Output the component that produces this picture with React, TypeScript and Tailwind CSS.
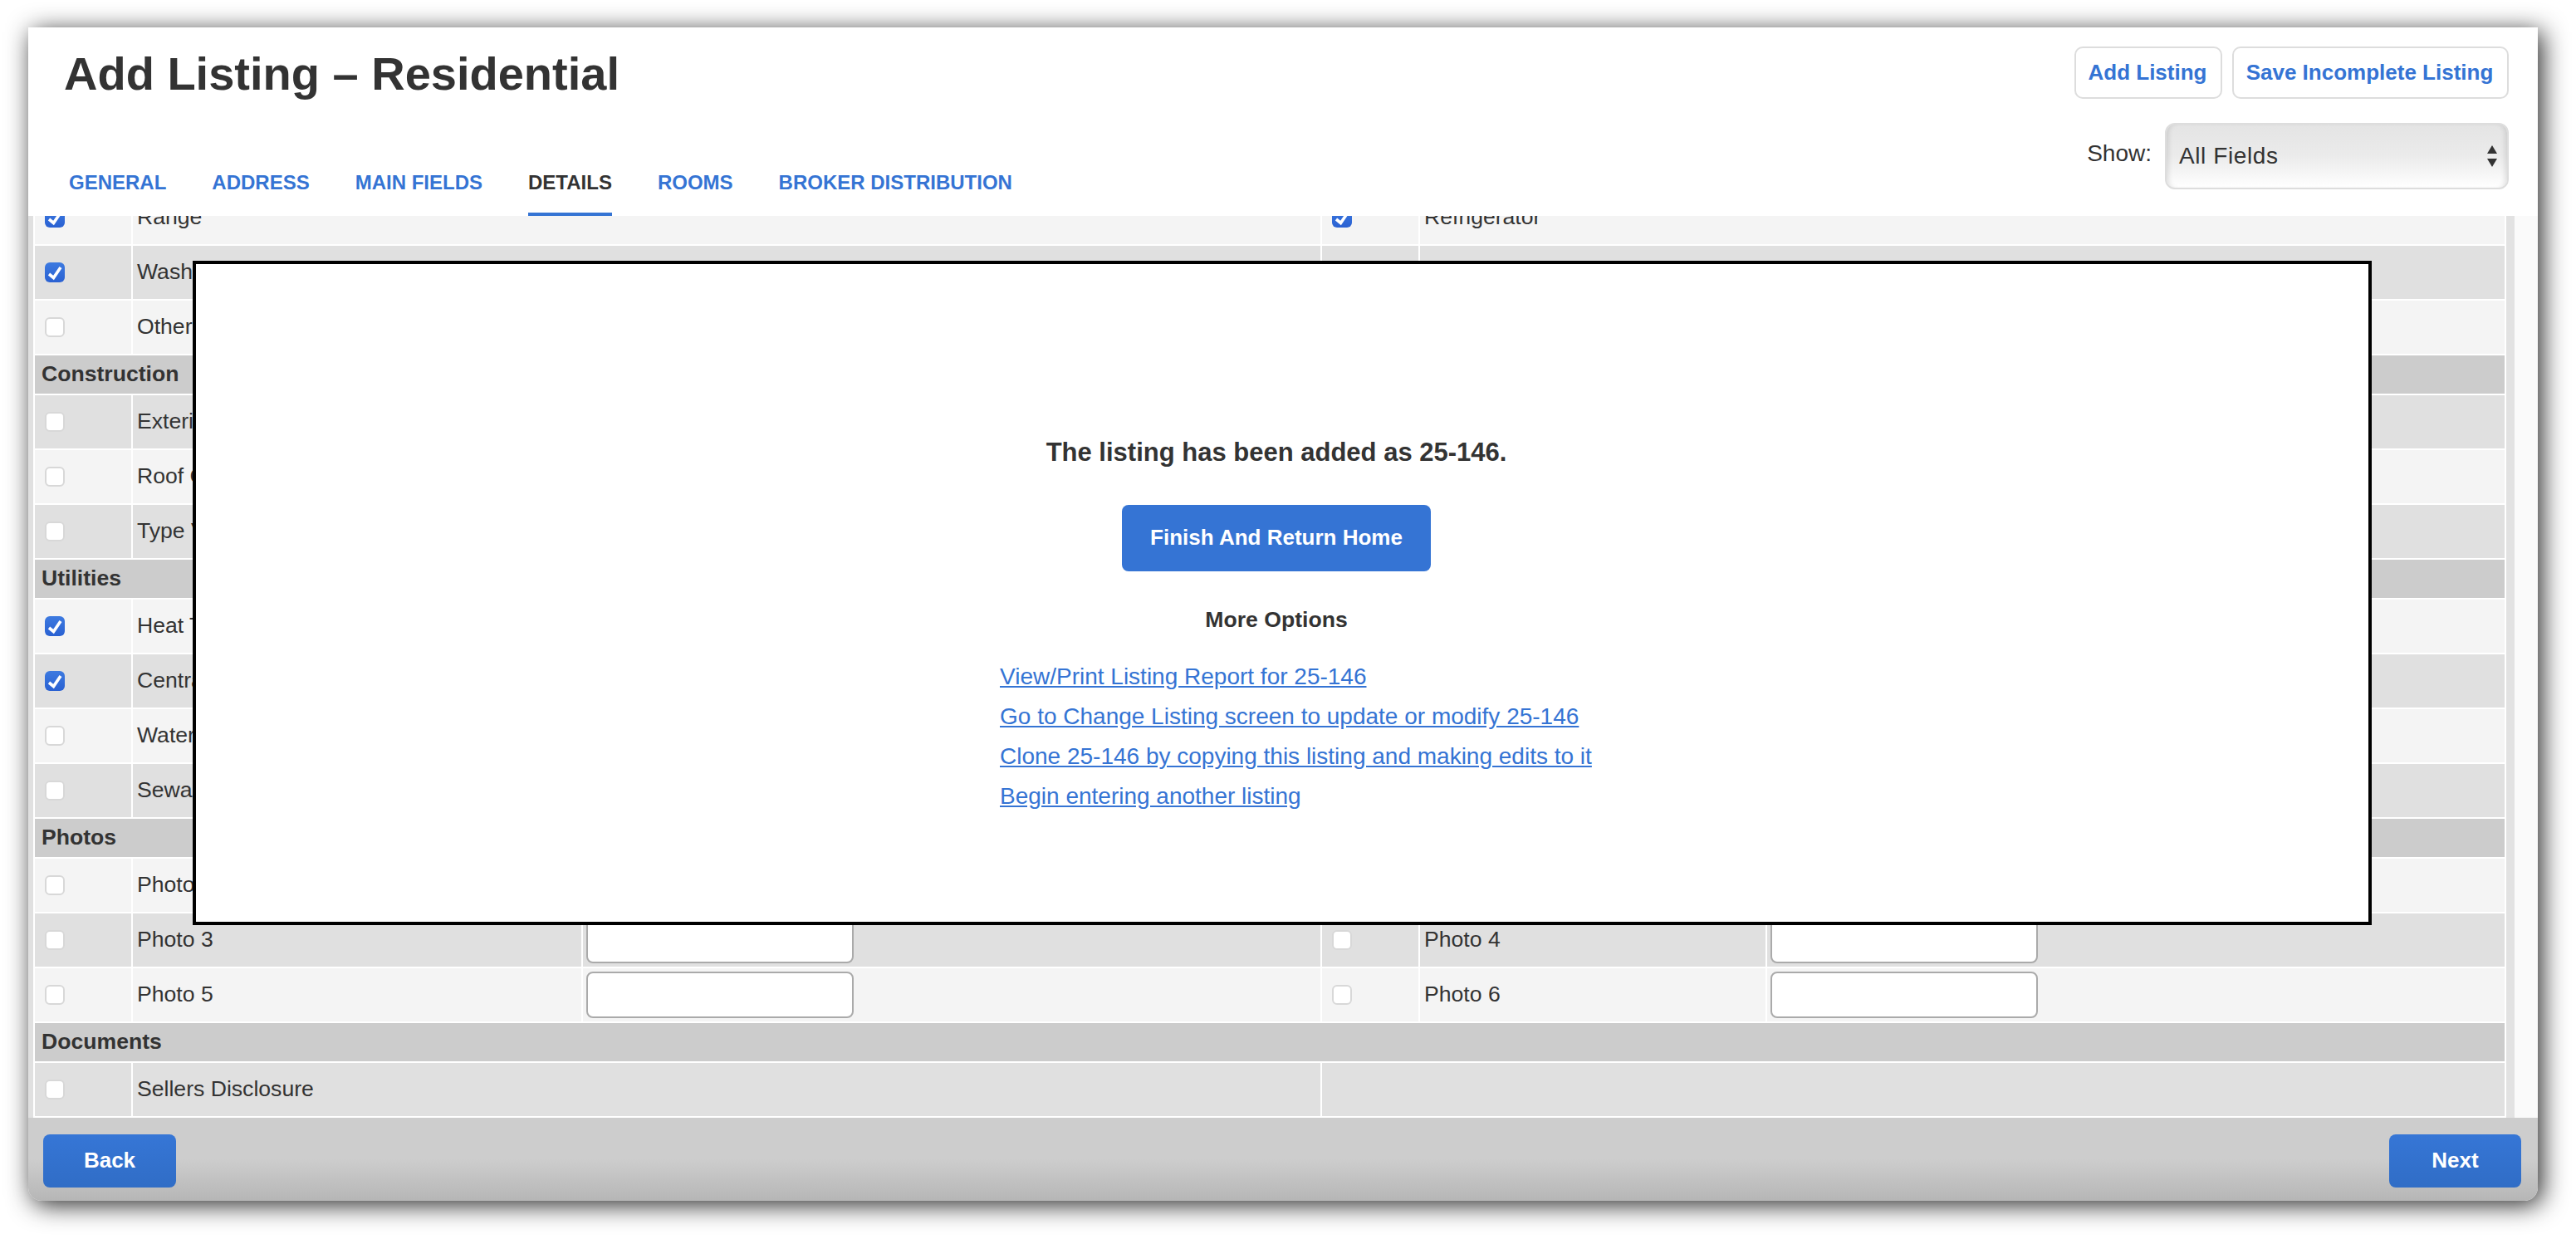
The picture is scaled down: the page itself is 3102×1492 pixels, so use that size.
import React from 'react';

type Field = { label: string; checked?: boolean; input?: boolean };
type Row =
  | { title: string }
  | { tone: 'light' | 'dark'; left: Field; right?: Field };

const rows: Row[] = [
  { tone: 'light', left: { label: 'Range', checked: true }, right: { label: 'Refrigerator', checked: true } },
  { tone: 'dark', left: { label: 'Washer', checked: true } },
  { tone: 'light', left: { label: 'Other' } },
  { title: 'Construction' },
  { tone: 'dark', left: { label: 'Exterior' } },
  { tone: 'light', left: { label: 'Roof Covering' } },
  { tone: 'dark', left: { label: 'Type Vent' } },
  { title: 'Utilities' },
  { tone: 'light', left: { label: 'Heat Type', checked: true } },
  { tone: 'dark', left: { label: 'Central Air', checked: true } },
  { tone: 'light', left: { label: 'Water' } },
  { tone: 'dark', left: { label: 'Sewage' } },
  { title: 'Photos' },
  { tone: 'light', left: { label: 'Photo 1', input: true }, right: { label: 'Photo 2', input: true } },
  { tone: 'dark', left: { label: 'Photo 3', input: true }, right: { label: 'Photo 4', input: true } },
  { tone: 'light', left: { label: 'Photo 5', input: true }, right: { label: 'Photo 6', input: true } },
  { title: 'Documents' },
];

const tabs = ['GENERAL', 'ADDRESS', 'MAIN FIELDS', 'DETAILS', 'ROOMS', 'BROKER DISTRIBUTION'];

const links = [
  'View/Print Listing Report for 25-146',
  'Go to Change Listing screen to update or modify 25-146',
  'Clone 25-146 by copying this listing and making edits to it',
  'Begin entering another listing',
];

const Checkbox = ({ checked }: { checked?: boolean }) =>
  checked ? (
    <span className="flex h-6 w-6 items-center justify-center rounded-[6px] bg-gradient-to-b from-[#3d7ae0] to-[#2a61d2]">
      <svg viewBox="0 0 24 24" className="h-6 w-6" fill="none" stroke="#fff" strokeWidth="3.6">
        <path d="M5 14l5.5 4.5L19 6" />
      </svg>
    </span>
  ) : (
    <span className="h-6 w-6 rounded-[6px] border-2 border-[#d8d8d8] bg-white" />
  );

const FieldCells = ({ field, bg }: { field?: Field; bg: string }) => (
  <>
    <div className={`flex items-center pl-3 ${bg}`}>{field && <Checkbox checked={field.checked} />}</div>
    {field?.input ? (
      <>
        <div className={`flex items-center pl-[5px] ${bg}`}>{field.label}</div>
        <div className={`flex items-center pl-1 ${bg}`}>
          <span className="h-14 w-[322px] rounded-[8px] border-2 border-[#aaaaaa] bg-white" />
        </div>
      </>
    ) : (
      <div className={`col-span-2 flex items-center pl-[5px] ${bg}`}>{field?.label}</div>
    )}
  </>
);

const TableRow = ({ row }: { row: Row }) => {
  if ('title' in row) {
    return <div className="flex h-[46px] items-center bg-[#cccccc] pl-2 font-bold">{row.title}</div>;
  }
  const bg = row.tone === 'light' ? 'bg-[#f4f4f4]' : 'bg-[#e0e0e0]';
  return (
    <div className="grid h-16 grid-cols-[116px_540px_888px_116px_416px_888px] gap-x-[2px]">
      <FieldCells field={row.left} bg={bg} />
      <FieldCells field={row.right} bg={bg} />
    </div>
  );
};

const BlueButton = ({ label, width }: { label: string; width: string }) => (
  <button className={`h-16 ${width} rounded-[8px] bg-gradient-to-b from-[#3676d6] to-[#306dc6] pb-0.5 text-[26px] font-bold text-white`}>
    {label}
  </button>
);

const FinishButton = () => (
  <button className="mt-[43px] h-20 w-[372px] rounded-[8px] bg-[#3574d4] pb-0.5 text-[26px] font-bold text-white">
    Finish And Return Home
  </button>
);

export default function App() {
  return (
    <div className="h-screen overflow-hidden bg-white pl-[34px] pt-[33px] font-['Liberation_Sans',Arial,sans-serif] text-[26.6px] text-[#333333]">
      <div className="relative flex h-[1413px] w-[3022px] flex-col rounded-b-[16px] bg-[#fafafa] shadow-[5px_5px_30px_rgba(0,0,0,0.85)]">
        <header className="flex h-[227px] shrink-0 justify-between bg-white">
          <div className="flex flex-col">
            <h1 className="pl-[43px] pt-[28px] text-[56px] font-bold leading-[56px]">Add Listing – Residential</h1>
            <nav className="mt-auto flex gap-[55px] pl-[49px]">
              {tabs.map((tab) => (
                <a
                  key={tab}
                  className={`border-b-4 pb-[22px] text-[24px] font-bold leading-7 ${
                    tab === 'DETAILS' ? 'border-[#3574d4] text-[#333333]' : 'border-transparent text-[#3574d4]'
                  }`}
                >
                  {tab}
                </a>
              ))}
            </nav>
          </div>
          <div className="flex flex-col items-end pr-[35px] pt-[23px]">
            <div className="flex gap-3">
              <button className="h-[63px] w-[178px] rounded-[10px] border-2 border-[#dddddd] pr-0.5 text-[26px] font-bold text-[#3574d4]">
                Add Listing
              </button>
              <button className="h-[63px] w-[333px] rounded-[10px] border-2 border-[#dddddd] pr-0.5 text-[26px] font-bold text-[#3574d4]">
                Save Incomplete Listing
              </button>
            </div>
            <div className="mt-[29px] flex items-center gap-4">
              <span className="mb-1.5 text-[28px]">Show:</span>
              <div className="flex h-20 w-[414px] items-center justify-between rounded-[12px] border-2 border-[#dddddd] bg-[linear-gradient(#e4e4e4,#ebebeb_50%,#ffffff)] pl-[15px] pr-[12px] shadow-[inset_6px_0_6px_-4px_rgba(0,0,0,0.12),inset_-6px_0_6px_-4px_rgba(0,0,0,0.12)]">
                <span className="text-[28px] tracking-[0.6px]">All Fields</span>
                <svg viewBox="0 0 12 26" className="h-[26px] w-3" fill="#333333">
                  <path d="M6 0l6 10H0zM6 26L0 16h12z" />
                </svg>
              </div>
            </div>
          </div>
        </header>

        <div className="flex min-h-0 flex-1 bg-white">
          <div className="mr-[2px] w-[6px] shrink-0 bg-[#e0e0e0]" />
          <div className="min-h-0 w-[2974px] shrink-0 overflow-hidden">
            <div className="-mt-[30px] flex flex-col gap-y-[2px]">
              {rows.map((row, i) => (
                <TableRow key={i} row={row} />
              ))}
              <div className="grid h-16 grid-cols-[116px_1430px_1fr] gap-x-[2px]">
                <div className="flex items-center bg-[#e0e0e0] pl-3">
                  <Checkbox />
                </div>
                <div className="flex items-center bg-[#e0e0e0] pl-[5px]">Sellers Disclosure</div>
                <div className="bg-[#e0e0e0]" />
              </div>
            </div>
          </div>
          <div className="ml-[2px] w-[10px] shrink-0 bg-[#e2e2e2]" />
          <div className="flex-1 bg-[#fafafa]" />
        </div>

        <footer className="flex h-[100px] shrink-0 items-start justify-between rounded-b-[16px] bg-[linear-gradient(#cdcdcd_50%,#b6b6b6)] pl-[18px] pr-5 pt-5">
          <BlueButton label="Back" width="w-40" />
          <BlueButton label="Next" width="w-[159px]" />
        </footer>

        <div className="absolute left-[198px] top-[281px] flex h-[800px] w-[2624px] flex-col items-center border-4 border-black bg-white pr-[14px] pt-[207px]">
          <p className="text-[31px] font-bold leading-10">The listing has been added as 25-146.</p>
          <FinishButton />
          <p className="mt-[42px] font-bold leading-8">More Options</p>
          <ul className="mt-[37px] flex w-[666px] flex-col gap-4 whitespace-nowrap text-[28px] leading-8 text-[#3574d4] underline">
            {links.map((link) => (
              <li key={link}>
                <a>{link}</a>
              </li>
            ))}
          </ul>
        </div>
      </div>
    </div>
  );
}
